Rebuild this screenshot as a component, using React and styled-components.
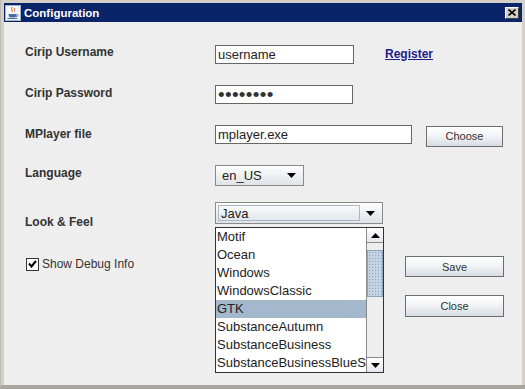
import React from 'react';
import styled, { createGlobalStyle } from 'styled-components';

const GlobalStyle = createGlobalStyle`
  html, body {
    margin: 0;
    padding: 0;
    background: #d4d0c8;
  }
  body {
    font-family: "Liberation Sans", Arial, sans-serif;
  }
`;

const Frame = styled.div`
  width: 525px;
  height: 389px;
  box-sizing: border-box;
  display: flex;
  flex-direction: column;
  padding: 3px 3px 0 3px;
  background: #d4d0c8;
  border-left: 1px solid #bdbab3;
  border-bottom: 4px solid #a9a69f;
`;

const TitleBar = styled.div`
  height: 19px;
  flex-shrink: 0;
  display: flex;
  align-items: center;
  padding: 0 3px 0 1px;
  background: #0a246a;
`;

const TitleText = styled.span`
  margin-left: 3px;
  color: #fff;
  font-size: 11.5px;
  font-weight: bold;
  flex: 1;
`;

const CloseBox = styled.div`
  width: 14px;
  height: 12px;
  box-sizing: border-box;
  display: flex;
  align-items: center;
  justify-content: center;
  background: #d4d0c8;
  border: 1px solid;
  border-color: #fff #404040 #404040 #fff;
`;

const Content = styled.div`
  flex: 1;
  display: flex;
  flex-direction: column;
  padding-left: 21px;
  background: #eeeeee;
`;

const Row = styled.div`
  display: flex;
  align-items: center;
  height: ${p => p.$h}px;
  margin-top: ${p => p.$gap}px;
`;

const Label = styled.div`
  width: 190px;
  flex-shrink: 0;
  font-size: 12px;
  font-weight: bold;
  color: #333;
  margin-top: ${p => p.$mt || 0}px;
  margin-bottom: ${p => p.$mb || 0}px;
`;

const TextField = styled.div`
  width: ${p => p.$w}px;
  height: ${p => p.$h || 19}px;
  box-sizing: border-box;
  display: flex;
  align-items: center;
  padding-left: 2px;
  border: 1px solid #666;
  background: #fff;
  font-size: 13px;
  color: #222;
  margin-bottom: ${p => p.$mb || 0}px;
`;

const Dots = styled.span`
  font-size: 19px;
  line-height: 1;
  color: #333;
  letter-spacing: 0.3px;
`;

const Link = styled.a`
  margin-left: 31px;
  margin-bottom: 2px;
  font-size: 12px;
  font-weight: bold;
  color: #1c1c8c;
  text-decoration: underline;
  cursor: pointer;
`;

const Button = styled.button`
  width: ${p => p.$w}px;
  height: ${p => p.$h}px;
  margin-left: ${p => p.$ml || 0}px;
  padding: 0;
  box-sizing: border-box;
  border: 1px solid #6e6e6e;
  background: linear-gradient(#ffffff, #f2f4f6 45%, #d6dde5);
  font-family: "Liberation Sans", Arial, sans-serif;
  font-size: 11px;
  color: #333;
`;

const Combo = styled.div`
  position: relative;
  width: ${p => p.$w}px;
  height: ${p => p.$h}px;
  box-sizing: border-box;
  display: flex;
  align-items: center;
  padding: 2px;
  border: 1px solid #8a8a8a;
  background: linear-gradient(#ffffff, #eef0f2 50%, #dfe3e8);
  font-size: 13px;
  color: #222;
`;

const ComboValue = styled.div`
  flex: 1;
  align-self: stretch;
  display: flex;
  align-items: center;
  padding-left: ${p => (p.$focused ? 2 : 3)}px;
  border: 1px solid ${p => (p.$focused ? '#a8b8c8' : 'transparent')};
`;

const ArrowBox = styled.div`
  width: 20px;
  display: flex;
  justify-content: center;
`;

const Popup = styled.div`
  position: absolute;
  top: 24px;
  left: -1px;
  width: 169px;
  height: 146px;
  box-sizing: border-box;
  display: flex;
  border: 1px solid #333;
  background: #fff;
  z-index: 2;
`;

const Items = styled.div`
  flex: 1;
  overflow: hidden;
`;

const Item = styled.div`
  height: 18px;
  line-height: 18px;
  padding-left: 1px;
  white-space: nowrap;
  font-size: 13px;
  color: #222;
  background: ${p => (p.$selected ? '#a3b8cc' : 'transparent')};
`;

const ScrollBar = styled.div`
  width: 16px;
  display: flex;
  flex-direction: column;
  border-left: 1px solid #8a8a8a;
  background: #eeeeee;
`;

const ScrollBtn = styled.div`
  height: 15px;
  box-sizing: border-box;
  display: flex;
  align-items: center;
  justify-content: center;
  background: linear-gradient(#ffffff, #e4e8ec);
  border-${p => (p.$down ? 'top' : 'bottom')}: 1px solid #8a8a8a;
`;

const Track = styled.div`
  flex: 1;
  padding-top: 7px;
`;

const Thumb = styled.div`
  height: 47px;
  box-sizing: border-box;
  border: 1px solid #8fa3ba;
  background-color: #c3d3e4;
  background-image: radial-gradient(#8ea6c3 0.8px, transparent 0.9px);
  background-size: 3px 3px;
`;

const CheckWrap = styled.label`
  width: 380px;
  flex-shrink: 0;
  display: flex;
  align-items: center;
  margin-bottom: 5px;
  font-size: 12px;
  color: #333;
`;

const Box = styled.span`
  width: 13px;
  height: 13px;
  box-sizing: border-box;
  margin: 0 3px 0 1px;
  display: flex;
  align-items: center;
  justify-content: center;
  border: 1px solid #333;
  background: #fff;
`;

const Spacer = styled.div`
  width: 380px;
  flex-shrink: 0;
`;

const Triangle = ({ up }) => (
  <svg width="9" height="5" viewBox="0 0 9 5">
    <path d={up ? 'M0 5 L4.5 0 L9 5 Z' : 'M0 0 L9 0 L4.5 5 Z'} fill="#000" />
  </svg>
);

const JavaIcon = () => (
  <svg width="16" height="16" viewBox="0 0 16 16">
    <rect x="0.5" y="0.5" width="15" height="15" fill="#f4f6fa" stroke="#9fb3cc" />
    <path d="M7 2 C5.5 4 8.5 5 7 7 M9.5 3 C8.5 4.5 10.5 5 9.5 6.5" stroke="#d2691e" strokeWidth="1" fill="none" />
    <path d="M3.5 9 L3.8 11.5 C4 12.8 11 12.8 11.2 11.5 L11.5 9 Z" fill="#4a6fa5" />
    <path d="M11.3 9.5 C13.5 9.3 13.5 11.5 11 11.6" stroke="#4a6fa5" strokeWidth="1" fill="none" />
    <path d="M2.5 13.5 L12.5 13.5" stroke="#4a6fa5" strokeWidth="1" />
  </svg>
);

const lookAndFeels = [
  'Motif',
  'Ocean',
  'Windows',
  'WindowsClassic',
  'GTK',
  'SubstanceAutumn',
  'SubstanceBusiness',
  'SubstanceBusinessBlueSteel',
];

export default function App() {
  return (
    <>
      <GlobalStyle />
      <Frame>
        <TitleBar>
          <JavaIcon />
          <TitleText>Configuration</TitleText>
          <CloseBox>
            <svg width="8" height="7" viewBox="0 0 8 7">
              <path d="M0.5 0.5 L7.5 6.5 M7.5 0.5 L0.5 6.5" stroke="#000" strokeWidth="1.6" />
            </svg>
          </CloseBox>
        </TitleBar>
        <Content>
          <Row $h={19} $gap={23}>
            <Label $mb={5}>Cirip Username</Label>
            <TextField $w={139}>username</TextField>
            <Link>Register</Link>
          </Row>
          <Row $h={19} $gap={21}>
            <Label $mb={3}>Cirip Password</Label>
            <TextField $w={138}>
              <Dots>••••••••</Dots>
            </TextField>
          </Row>
          <Row $h={22} $gap={21}>
            <Label $mb={5}>MPlayer file</Label>
            <TextField $w={197} $h={19} $mb={4}>mplayer.exe</TextField>
            <Button $w={77} $h={21} $ml={14}>Choose</Button>
          </Row>
          <Row $h={21} $gap={18}>
            <Label $mb={5}>Language</Label>
            <Combo $w={89} $h={21}>
              <ComboValue>en_US</ComboValue>
              <ArrowBox>
                <Triangle />
              </ArrowBox>
            </Combo>
          </Row>
          <Row $h={22} $gap={16}>
            <Label $mt={18}>Look &amp; Feel</Label>
            <Combo $w={168} $h={22}>
              <ComboValue $focused>Java</ComboValue>
              <ArrowBox>
                <Triangle />
              </ArrowBox>
              <Popup>
                <Items>
                  {lookAndFeels.map(name => (
                    <Item key={name} $selected={name === 'GTK'}>{name}</Item>
                  ))}
                </Items>
                <ScrollBar>
                  <ScrollBtn>
                    <Triangle up />
                  </ScrollBtn>
                  <Track>
                    <Thumb />
                  </Track>
                  <ScrollBtn $down>
                    <Triangle />
                  </ScrollBtn>
                </ScrollBar>
              </Popup>
            </Combo>
          </Row>
          <Row $h={21} $gap={32}>
            <CheckWrap>
              <Box>
                <svg width="9" height="8" viewBox="0 0 9 8">
                  <path d="M1 3.5 L3.5 6.5 L8 1" stroke="#000" strokeWidth="2" fill="none" />
                </svg>
              </Box>
              Show Debug Info
            </CheckWrap>
            <Button $w={99} $h={21}>Save</Button>
          </Row>
          <Row $h={22} $gap={18}>
            <Spacer />
            <Button $w={99} $h={22}>Close</Button>
          </Row>
        </Content>
      </Frame>
    </>
  );
}
